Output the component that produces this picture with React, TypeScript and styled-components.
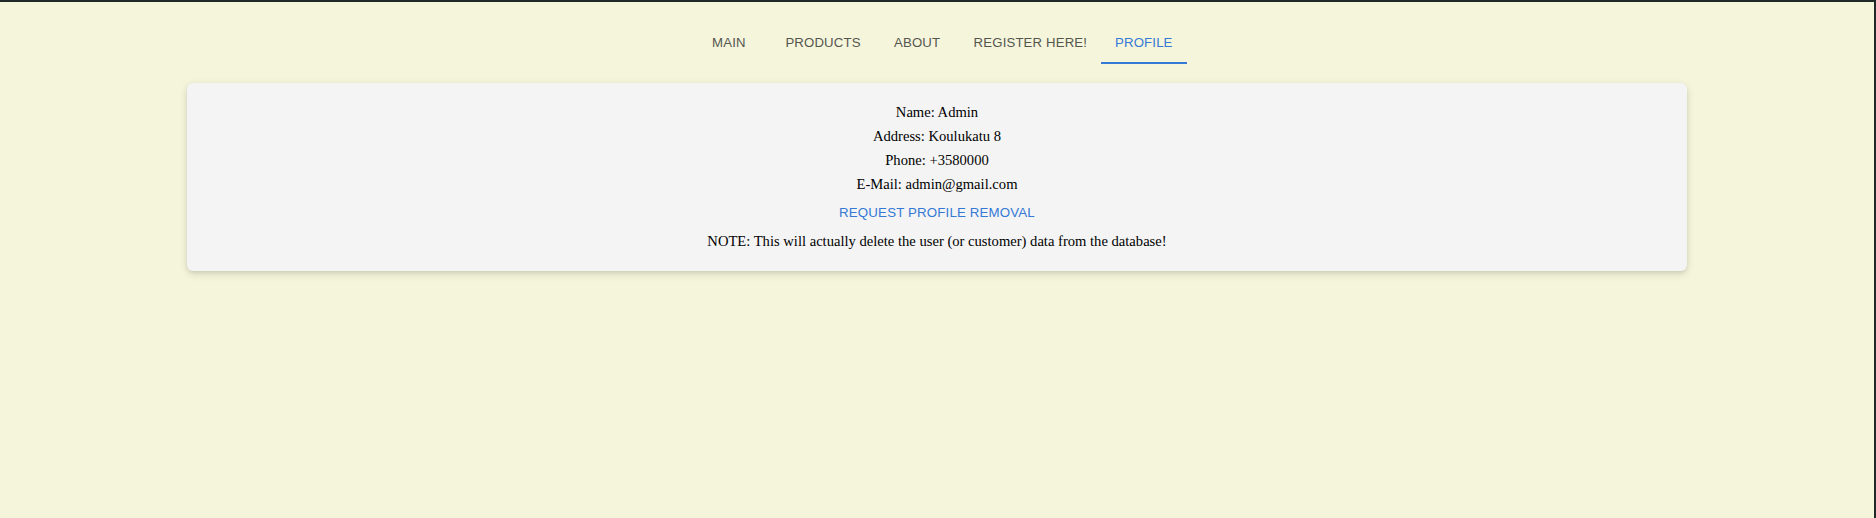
import React from "react";
import styled, { createGlobalStyle } from "styled-components";

const GlobalStyle = createGlobalStyle`
  html, body {
    margin: 0;
    padding: 0;
    background: #f5f5dc;
  }
  * { box-sizing: border-box; }
`;

const Frame = styled.div`
  min-height: 100vh;
  background: #f5f5dc;
  border-top: 2px solid #1f2a26;
  border-right: 2px solid #1f2a26;
  display: flex;
  flex-direction: column;
  align-items: center;
`;

const TabBar = styled.nav`
  display: flex;
  justify-content: center;
  margin-top: 14px;
  margin-left: -1px;
  height: 48px;
`;

const Tab = styled.button<{ $active?: boolean }>`
  position: relative;
  min-width: 85px;
  height: 48px;
  padding: 4px 14px 0;
  border: none;
  background: transparent;
  font-family: "Liberation Sans", Arial, Helvetica, sans-serif;
  font-size: 13.2px;
  letter-spacing: 0.15px;
  text-transform: uppercase;
  color: ${(p) => (p.$active ? "#3479d6" : "#55554f")};
  display: flex;
  align-items: center;
  justify-content: center;
  cursor: pointer;

  &::after {
    content: "";
    display: ${(p) => (p.$active ? "block" : "none")};
    position: absolute;
    left: 0;
    right: 0;
    bottom: 0;
    height: 2px;
    background: #3479d6;
  }
`;

const Card = styled.section`
  width: 80%;
  margin-top: 19px;
  background: #f4f4f4;
  border-radius: 6px;
  box-shadow: 0 2px 4px -1px rgba(0, 0, 0, 0.1), 0 4px 8px 0 rgba(0, 0, 0, 0.07),
    0 1px 10px 0 rgba(0, 0, 0, 0.06);
  padding: 17px 16px 18px;
  display: flex;
  flex-direction: column;
  align-items: center;
`;

const Line = styled.p`
  margin: 0;
  font-family: "Liberation Serif", "Times New Roman", serif;
  font-size: 14.6px;
  line-height: 24px;
  color: #000;
  text-align: center;
`;

const TextButton = styled.button`
  height: 33px;
  padding: 0 5px 1px;
  border: none;
  background: transparent;
  font-family: "Liberation Sans", Arial, Helvetica, sans-serif;
  font-size: 13.3px;
  letter-spacing: 0.15px;
  text-transform: uppercase;
  color: #3479d6;
  cursor: pointer;
`;

const tabs = ["Main", "Products", "About", "Register here!", "Profile"];

export default function App() {
  return (
    <>
      <GlobalStyle />
      <Frame>
        <TabBar>
          {tabs.map((t) => (
            <Tab key={t} $active={t === "Profile"}>
              {t}
            </Tab>
          ))}
        </TabBar>
        <Card>
          <Line>Name: Admin</Line>
          <Line>Address: Koulukatu 8</Line>
          <Line>Phone: +3580000</Line>
          <Line>E-Mail: admin@gmail.com</Line>
          <TextButton>Request profile removal</TextButton>
          <Line>NOTE: This will actually delete the user (or customer) data from the database!</Line>
        </Card>
      </Frame>
    </>
  );
}
